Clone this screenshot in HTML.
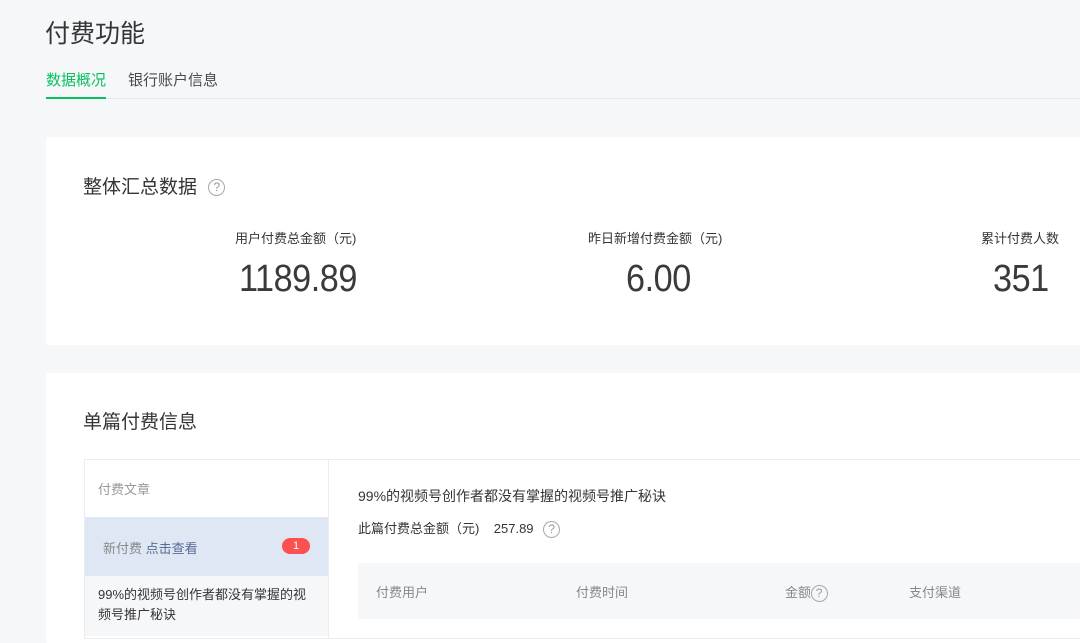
<!DOCTYPE html>
<html><head><meta charset="utf-8"><style>
*{margin:0;padding:0;box-sizing:border-box}
body{width:1080px;height:632px;overflow:hidden;background:#f6f7f9;font-family:"Liberation Sans","Noto Sans CJK SC",sans-serif;color:#353535;position:relative}
.a{position:absolute;white-space:nowrap}
.q{display:inline-block;width:17px;height:17px;border:1.3px solid #a8a8a8;border-radius:50%;color:#999;font-size:12px;line-height:15px;text-align:center;vertical-align:middle}
.card{position:absolute;background:#fff;left:46px;width:1040px;border-radius:2px}
.n{font-size:38px;color:#3a3a3a;transform:scaleX(0.9);transform-origin:left top;letter-spacing:-0.5px}
</style></head><body>
<div class="a" style="left:45px;top:14px;font-size:25px;color:#353535">付费功能</div>
<div class="a" style="left:46px;top:69px;font-size:15px;color:#07c160">数据概况</div>
<div class="a" style="left:128px;top:69px;font-size:15px;color:#4a4a4a">银行账户信息</div>
<div class="a" style="left:46px;top:98px;width:1034px;height:1px;background:#e6e7ea"></div>
<div class="a" style="left:46px;top:97px;width:60px;height:2px;background:#07c160"></div>

<div class="card" style="top:137px;height:208px"></div>
<div class="a" style="left:83px;top:172px;font-size:19px">整体汇总数据 <span class="q" style="margin-left:6px">?</span></div>
<div class="a" style="left:235px;top:228px;font-size:13px">用户付费总金额（元)</div>
<div class="a n" style="left:239px;top:258px">1189.89</div>
<div class="a" style="left:588px;top:228px;font-size:13px">昨日新增付费金额（元)</div>
<div class="a n" style="left:626px;top:258px">6.00</div>
<div class="a" style="left:981px;top:228px;font-size:13px">累计付费人数</div>
<div class="a n" style="left:993px;top:258px">351</div>

<div class="card" style="top:373px;height:270px"></div>
<div class="a" style="left:83px;top:407px;font-size:19px">单篇付费信息</div>
<div class="a" style="left:84px;top:459px;width:1000px;height:180px;border:1px solid #ebedf0"></div>
<div class="a" style="left:328px;top:459px;width:1px;height:180px;background:#ebedf0"></div>
<div class="a" style="left:98px;top:479px;font-size:13px;color:#999">付费文章</div>
<div class="a" style="left:85px;top:517px;width:243px;height:59px;background:#dee7f3"></div>
<div class="a" style="left:103px;top:538px;font-size:13px;color:#888">新付费 <span style="color:#576b95">点击查看</span></div>
<div class="a" style="left:282px;top:538px;width:28px;height:16px;border-radius:8px;background:#fa5151;color:#fff;font-size:11px;line-height:16px;text-align:center">1</div>
<div class="a" style="left:85px;top:576px;width:243px;height:60px;background:#f6f7f9"></div>
<div class="a" style="left:98px;top:585px;font-size:13px;line-height:20px;color:#353535;white-space:normal;width:220px">99%的视频号创作者都没有掌握的视频号推广秘诀</div>
<div class="a" style="left:358px;top:486px;font-size:14px">99%的视频号创作者都没有掌握的视频号推广秘诀</div>
<div class="a" style="left:358px;top:518px;font-size:13px">此篇付费总金额（元)&nbsp;&nbsp;&nbsp; 257.89 <span class="q" style="margin-left:6px">?</span></div>
<div class="a" style="left:358px;top:563px;width:730px;height:56px;background:#f6f7f9"></div>
<div class="a" style="left:376px;top:582px;font-size:13px;color:#888">付费用户</div>
<div class="a" style="left:576px;top:582px;font-size:13px;color:#888">付费时间</div>
<div class="a" style="left:785px;top:582px;font-size:13px;color:#888">金额 <span class="q" style="margin-left:-4px">?</span></div>
<div class="a" style="left:909px;top:582px;font-size:13px;color:#888">支付渠道</div>
</body></html>
